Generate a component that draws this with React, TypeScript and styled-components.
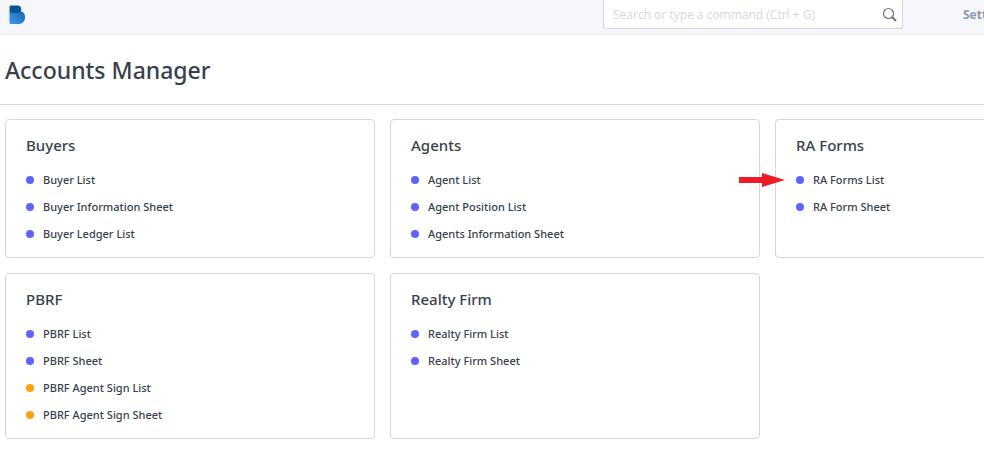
import React from "react";
import styled, { createGlobalStyle } from "styled-components";

const GlobalStyle = createGlobalStyle`
  * { box-sizing: border-box; }
  body { margin: 0; background: #fff; color: #36414c; font-family: "Noto Sans", sans-serif; font-size: 11px; overflow-x: hidden; }
`;
const Navbar = styled.header`
  display: grid;
  grid-template-columns: 1fr 300px 81px;
  height: 35px;
  background: #f5f7fa;
  border-bottom: 1px solid #ebeff2;
  font-family: "Open Sans", sans-serif;
  font-size: 12px;
  overflow: hidden;
`;
const Brand = styled.a`
  padding: 5px 8px;
`;
const Search = styled.form`
  display: flex;
  align-items: center;
  height: 29px;
  padding: 0 5px 0 9px;
  background: #fff;
  border: 1px solid #d1d8dd;
  border-top: 0;
  border-radius: 0 0 3px 3px;
`;
const SearchInput = styled.input`
  flex: 1;
  min-width: 0;
  padding: 0;
  border: 0;
  outline: 0;
  font: inherit;
  &::placeholder { color: #d1d8dd; opacity: 1; }
`;
const SearchButton = styled.button`
  display: flex;
  padding: 0;
  border: 0;
  background: none;
`;
const MenuLink = styled.a`
  padding: 7px 0 0 60px;
  line-height: 16px;
  font-weight: 700;
  color: #8d99a6;
  text-decoration: none;
  white-space: nowrap;
`;
const PageHead = styled.div`
  padding: 19px 5px 18px;
  border-bottom: 1px solid #d1d8dd;
`;
const Title = styled.h1`
  margin: 0;
  font-size: 23px;
  line-height: 32px;
  font-weight: 500;
`;
const Cards = styled.main`
  display: grid;
  grid-template-columns: repeat(3, minmax(370px, 1fr));
  gap: 15px;
  padding: 14px 5px;
`;
const Card = styled.section`
  padding: 14px 20px 10px;
  border: 1px solid #d1d8dd;
  border-radius: 4px;
`;
const CardTitle = styled.h2`
  margin: 0 0 10px;
  font-size: 15px;
  line-height: 22px;
  font-weight: 500;
`;
const List = styled.ul`
  margin: 0;
  padding: 0;
  list-style: none;
`;
const Item = styled.li`
  display: flex;
  align-items: center;
  position: relative;
  height: 27px;
`;
const Dot = styled.span<{ $color: string }>`
  width: 8px;
  height: 8px;
  margin-right: 9px;
  border-radius: 50%;
  background: ${(p) => p.$color};
`;
const ItemLink = styled.a`
  color: inherit;
  font-weight: 500;
  line-height: 18px;
  text-decoration: none;
`;
const Pointer = styled.svg`
  position: absolute;
  right: 100%;
  margin-right: 11px;
`;

const blue = "#5e64ff";
const orange = "#ffa00a";
const cards = [
  { title: "Buyers", items: [["Buyer List", blue], ["Buyer Information Sheet", blue], ["Buyer Ledger List", blue]] },
  { title: "Agents", items: [["Agent List", blue], ["Agent Position List", blue], ["Agents Information Sheet", blue]] },
  { title: "RA Forms", items: [["RA Forms List", blue], ["RA Form Sheet", blue]] },
  { title: "PBRF", items: [["PBRF List", blue], ["PBRF Sheet", blue], ["PBRF Agent Sign List", orange], ["PBRF Agent Sign Sheet", orange]] },
  { title: "Realty Firm", items: [["Realty Firm List", blue], ["Realty Firm Sheet", blue]] },
];

export default function App() {
  return (
    <>
      <GlobalStyle />
      <Navbar>
        <Brand href="#" aria-label="Home">
          <svg width="17" height="20" viewBox="0 0 17 20">
            <defs>
              <linearGradient id="brand" x1="0" y1="1" x2="1" y2="0">
                <stop offset="0" stopColor="#3f97ea" />
                <stop offset="1" stopColor="#1767b5" />
              </linearGradient>
            </defs>
            <path d="M1.500 6h10a5.500 5.500 0 0 1 5.500 6v1A6 6 0 0 1 11 19H2.500a1 1 0 0 1-1-1z" fill="url(#brand)" />
            <path d="M1.500 2a1.500 1.500 0 0 1 1.500-1.500h6.500A3.700 3.700 0 0 1 13.300 4.300v0A3.700 3.700 0 0 1 9.500 8H4A2.500 2.500 0 0 1 1.500 5.500z" fill="#0d5590" />
          </svg>
        </Brand>
        <Search>
          <SearchInput aria-label="Search" placeholder="Search or type a command (Ctrl + G)" />
          <SearchButton type="button" aria-label="Search">
            <svg width="15" height="15" viewBox="0 0 15 15" fill="none" stroke="#6b747d"><circle cx="6.500" cy="6.500" r="5" strokeWidth="1.200" /><path d="M10 10l4 4" strokeWidth="2" /></svg>
          </SearchButton>
        </Search>
        <MenuLink href="#">Settings</MenuLink>
      </Navbar>
      <PageHead><Title>Accounts Manager</Title></PageHead>
      <Cards>
        {cards.map((c) => (
          <Card key={c.title}>
            <CardTitle>{c.title}</CardTitle>
            <List>
              {c.items.map(([label, color]) => (
                <Item key={label}>
                  {label === "RA Forms List" && (
                    <Pointer width="46" height="14" viewBox="0 0 46 14"><path d="M0 4h23V0l23 7-23 7v-4H0z" fill="#ed1c24" /></Pointer>
                  )}
                  <Dot $color={color} />
                  <ItemLink href="#">{label}</ItemLink>
                </Item>
              ))}
            </List>
          </Card>
        ))}
      </Cards>
    </>
  );
}
